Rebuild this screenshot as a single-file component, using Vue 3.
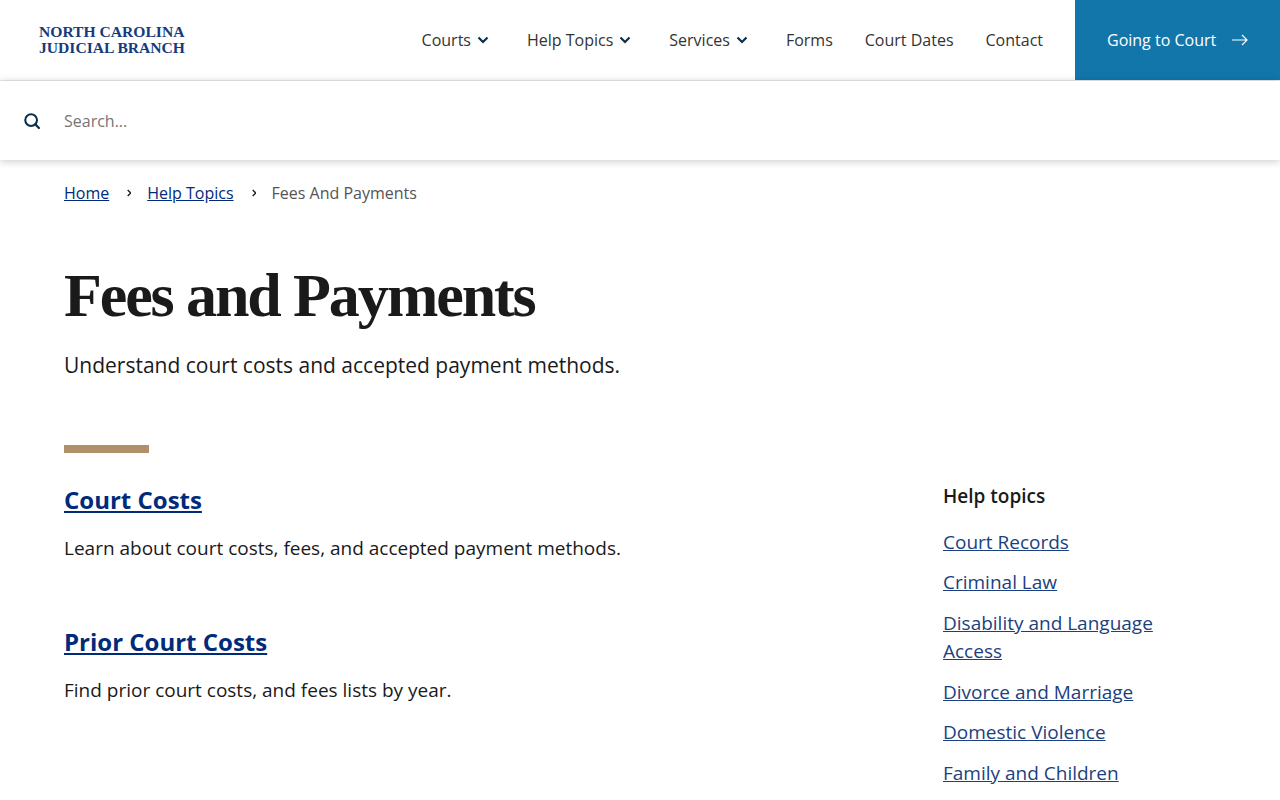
<script setup>
const nav = [
  { label: 'Courts', caret: true },
  { label: 'Help Topics', caret: true },
  { label: 'Services', caret: true },
  { label: 'Forms' },
  { label: 'Court Dates' },
  { label: 'Contact' },
]
const articles = [
  { title: 'Court Costs', text: 'Learn about court costs, fees, and accepted payment methods.' },
  { title: 'Prior Court Costs', text: 'Find prior court costs, and fees lists by year.' },
]
const topics = ['Court Records', 'Criminal Law', 'Disability and Language Access', 'Divorce and Marriage', 'Domestic Violence', 'Family and Children']
</script>

<template>
  <div class="page">
    <header class="header">
      <a class="logo" href="#"><span>NORTH CAROLINA</span><span>JUDICIAL BRANCH</span></a>
      <nav class="nav">
        <a v-for="item in nav" :key="item.label" class="nav-item" href="#">
          {{ item.label }}
          <svg v-if="item.caret" class="caret" viewBox="0 0 12 8" width="12" height="8"><path d="M1.5 1.5 6 6l4.5-4.5" fill="none" stroke="#0b2f4a" stroke-width="2.2"/></svg>
        </a>
      </nav>
      <a class="cta" href="#">
        Going to Court
        <svg viewBox="0 0 16 12" width="16" height="12"><path d="M0 6h15M10 1l5 5-5 5" fill="none" stroke="#fff" stroke-width="1.2"/></svg>
      </a>
    </header>
    <div class="search">
      <svg viewBox="0 0 18 18" width="16" height="16"><circle cx="8" cy="8" r="6.6" fill="none" stroke="#0b2f4a" stroke-width="2.3"/><path d="M12.8 12.8 16.8 16.8" stroke="#0b2f4a" stroke-width="2.5" stroke-linecap="round"/></svg>
      <span class="placeholder">Search...</span>
    </div>
    <nav class="crumbs">
      <a href="#">Home</a>
      <svg viewBox="0 0 6 8" width="6" height="8"><path d="M2.7 1 5.7 4l-3 3" fill="none" stroke="#222" stroke-width="1.4"/></svg>
      <a href="#">Help Topics</a>
      <svg viewBox="0 0 6 8" width="6" height="8"><path d="M2.7 1 5.7 4l-3 3" fill="none" stroke="#222" stroke-width="1.4"/></svg>
      <span>Fees And Payments</span>
    </nav>
    <section class="hero">
      <h1>Fees and Payments</h1>
      <p>Understand court costs and accepted payment methods.</p>
    </section>
    <div class="rule"></div>
    <div class="columns">
      <main class="main">
        <article v-for="a in articles" :key="a.title" class="article">
          <h2><a href="#">{{ a.title }}</a></h2>
          <p>{{ a.text }}</p>
        </article>
      </main>
      <aside class="side">
        <h3>Help topics</h3>
        <ul>
          <li v-for="t in topics" :key="t"><a href="#">{{ t }}</a></li>
        </ul>
      </aside>
    </div>
  </div>
</template>

<style>
html, body { margin: 0; overflow: hidden; }
</style>

<style scoped>
.page { height: 800px; overflow: hidden; font-family: "Open Sans", sans-serif; color: #1a1a1a; background: #fff; }
a { color: #002b7a; }
.header { height: 81px; box-sizing: border-box; border-bottom: 1px solid #ebebeb; display: flex; align-items: flex-start; padding-left: 39px; }
.logo { height: 80px; justify-content: center; display: flex; flex-direction: column; font-family: "Liberation Serif", serif; font-weight: 700; font-size: 15.6px; line-height: 16px; color: #163b7c; text-decoration: none; white-space: nowrap; }
.nav { margin-left: auto; height: 80px; display: flex; align-items: center; gap: 32px; }
.nav-item { display: flex; align-items: center; gap: 6px; font-size: 16px; color: #333; text-decoration: none; }
.caret { margin-right: 6px; }
.cta { margin-left: 32px; width: 205px; height: 80px; box-sizing: border-box; padding: 0 32px; background: #1276aa; color: #fff; font-size: 16px; display: flex; align-items: center; justify-content: space-between; text-decoration: none; }
.search { height: 79px; display: flex; align-items: center; gap: 24px; padding-left: 24px; box-shadow: 0 1px 8px rgba(0,0,0,.22); position: relative; }
.placeholder { font-size: 16px; color: #757575; }
.crumbs { display: flex; align-items: center; gap: 16px; padding: 22px 64px 0; font-size: 16px; line-height: 22px; color: #555; }
.hero { padding: 0 64px; }
h1 { margin: 56px 0 0; font-family: "Liberation Serif", serif; font-weight: 700; font-size: 62px; line-height: 70px; letter-spacing: -2.1px; color: #1a1a1a; }
.hero p { margin: 20px 0 0; font-size: 21px; line-height: 30px; color: #1a1a1a; }
.rule { width: 85px; height: 8px; background: #ae9169; margin: 65px 0 0 64px; }
.columns { display: flex; justify-content: space-between; padding: 30px 64px 0; }
.article { margin-bottom: 63px; }
h2 { margin: 0; font-size: 24px; line-height: 34px; font-weight: 700; }
.article p { margin: 17px 0 0; font-size: 19px; line-height: 28px; }
.side { width: 273px; box-sizing: border-box; padding-right: 40px; }
h3 { margin: 0; font-size: 19px; line-height: 26px; font-weight: 600; }
ul { list-style: none; margin: 18.8px 0 0; padding: 0; }
li { font-size: 19px; line-height: 28px; margin-bottom: 12.6px; }
li a { color: #1c3f80; }
</style>
